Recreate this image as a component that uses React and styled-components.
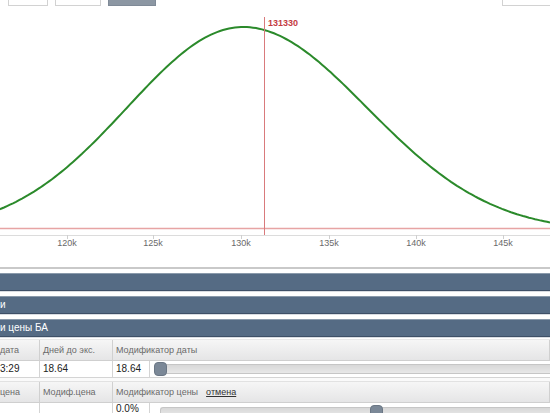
import React from "react";
import styled, { createGlobalStyle } from "styled-components";

const GlobalStyle = createGlobalStyle`
  html, body {
    margin: 0;
    padding: 0;
    background: #ffffff;
    overflow: hidden;
  }
  body {
    font-family: "Liberation Sans", Arial, sans-serif;
  }
`;

const Page = styled.div`
  width: 550px;
  height: 413px;
  overflow: hidden;
  display: flex;
  flex-direction: column;

  & > * {
    flex: none;
  }
`;

const ButtonRow = styled.div`
  height: 6px;
  display: flex;
  align-items: flex-end;
  gap: 7px;
  padding-left: 8px;
  overflow: hidden;
`;
const RangeButton = styled.div`
  flex: none;
  width: ${(p) => p.w}px;
  height: 20px;
  box-sizing: border-box;
  border: 1px solid ${(p) => (p.active ? "#7f8a97" : "#d2d2d2")};
  background: ${(p) => (p.active ? "#8c97a3" : "#ffffff")};
  margin-left: ${(p) => (p.right ? "auto" : "0")};
  margin-right: ${(p) => (p.right ? "-4px" : "0")};
`;

const ChartBox = styled.div`
  height: 261px;
  border-bottom: 2px solid #c9c9c9;
`;

const Sections = styled.div`
  display: flex;
  flex-direction: column;
  padding-top: 4px;
`;
const SectionBar = styled.div`
  height: 16px;
  margin-top: ${(p) => (p.first ? "0" : "5px")};
  background: #556b84;
  border-top: 1px solid #8a9aab;
  border-bottom: 1px solid #3e5067;
  color: #ffffff;
  font-size: 10px;
  line-height: 16px;
  white-space: nowrap;
  box-shadow: 0 1px 0 #d9dde2;
`;

const Table = styled.div`
  margin-top: 2px;
  display: grid;
  grid-template-columns: 40px 73px 37px 1fr;
  border-top: 1px solid #e8e8e8;
`;
const HeadCell = styled.div`
  grid-column: ${(p) => p.span || "auto"};
  height: 21px;
  box-sizing: border-box;
  background: linear-gradient(#f6f6f6, #e5e5e6);
  border-right: 1px solid #d0d0d0;
  border-bottom: 1px solid #cfcfcf;
  color: #6a6a6a;
  font-size: 9px;
  line-height: 20px;
  padding-left: ${(p) => (p.pad === 0 ? 0 : 3)}px;
  white-space: nowrap;
  overflow: hidden;
`;
const DataCell = styled.div`
  height: ${(p) => p.h || 17}px;
  box-sizing: border-box;
  background: #ffffff;
  border-right: 1px solid #d4d4d4;
  border-bottom: ${(p) => (p.last ? "none" : "1px solid #d4d4d4")};
  color: #222;
  font-size: 10px;
  line-height: ${(p) => (p.last ? 12 : 16)}px;
  padding-left: ${(p) => (p.pad === 0 ? 0 : 3)}px;
  white-space: nowrap;
  overflow: hidden;
`;
const Spacer = styled.div`
  grid-column: 1 / -1;
  height: 3px;
  background: #fafafa;
  border-bottom: 1px solid #e2e2e2;
`;
const SliderCell = styled.div`
  display: flex;
  align-items: ${(p) => (p.top ? "flex-start" : "center")};
  padding-left: ${(p) => p.inset}px;
  padding-top: ${(p) => (p.top ? 4 : 0)}px;
  height: ${(p) => p.h}px;
  box-sizing: border-box;
  border-bottom: ${(p) => (p.last ? "none" : "1px solid #d4d4d4")};
  background: #fff;
`;
const Track = styled.div`
  position: relative;
  flex: 1;
  height: 10px;
  box-sizing: border-box;
  background: linear-gradient(#d8d8d8, #e8e8e8);
  border: 1px solid #c6c6c6;
  border-right: none;
  border-radius: 3px 0 0 3px;
`;
const Thumb = styled.div`
  position: absolute;
  top: -3px;
  left: ${(p) => p.at}px;
  width: 13px;
  height: 14px;
  border-radius: 4px;
  background: #7b8897;
  border: 1px solid #6b7785;
  box-sizing: border-box;
`;
const CancelLink = styled.span`
  margin-left: 8px;
  color: #333;
  text-decoration: underline;
`;

const ticks = [
  { x: 67, label: "120k" },
  { x: 153, label: "125k" },
  { x: 241, label: "130k" },
  { x: 329, label: "135k" },
  { x: 416, label: "140k" },
  { x: 503, label: "145k" },
];

const buildCurve = () => {
  const peakX = 243;
  const base = 232;
  const amp = base - 27;
  const pts = [];
  for (let x = -2; x <= 552; x += 3) {
    const d = x - peakX;
    const s = d < 0 ? 116 : 124;
    const y = base - amp * Math.exp(-(d * d) / (2 * s * s));
    pts.push(`${x},${y.toFixed(1)}`);
  }
  return "M" + pts.join(" L");
};

const DistributionChart = () => (
  <svg width="550" height="261" viewBox="0 6 550 261" style={{ display: "block" }}>
    <line x1="0" y1="228.5" x2="550" y2="228.5" stroke="#e7a4a4" strokeWidth="1.5" />
    <line x1="0" y1="235.5" x2="550" y2="235.5" stroke="#dcdcdc" strokeWidth="1" />
    {ticks.map((t) => (
      <g key={t.label}>
        <line x1={t.x + 0.5} y1="235" x2={t.x + 0.5} y2="239" stroke="#cfcfcf" />
        <text x={t.x} y="246" fontSize="9" fill="#6a6a6a" textAnchor="middle" fontFamily="Liberation Sans, Arial, sans-serif">
          {t.label}
        </text>
      </g>
    ))}
    <path d={buildCurve()} fill="none" stroke="#2b8a2b" strokeWidth="2" />
    <line x1="264.5" y1="17" x2="264.5" y2="235" stroke="#d97a7c" strokeWidth="1" />
    <text x="268" y="26" fontSize="9" fontWeight="bold" fill="#c43c3f" fontFamily="Liberation Sans, Arial, sans-serif">
      131330
    </text>
  </svg>
);

export default function App() {
  return (
    <Page>
      <GlobalStyle />
      <ButtonRow>
        <RangeButton w={40} />
        <RangeButton w={46} />
        <RangeButton w={48} active />
        <RangeButton w={52} right />
      </ButtonRow>
      <ChartBox>
        <DistributionChart />
      </ChartBox>
      <Sections>
        <SectionBar first />
        <SectionBar>и</SectionBar>
        <SectionBar>и цены БА</SectionBar>
      </Sections>
      <Table>
        <HeadCell pad={0}>дата</HeadCell>
        <HeadCell>Дней до экс.</HeadCell>
        <HeadCell span="3 / 5">Модификатор даты</HeadCell>
        <DataCell pad={0}>3:29</DataCell>
        <DataCell>18.64</DataCell>
        <DataCell>18.64</DataCell>
        <SliderCell inset={6} h={17}>
          <Track>
            <Thumb at={-3} />
          </Track>
        </SliderCell>
        <Spacer />
        <HeadCell pad={0}>цена</HeadCell>
        <HeadCell>Модиф.цена</HeadCell>
        <HeadCell span="3 / 5">
          Модификатор цены<CancelLink>отмена</CancelLink>
        </HeadCell>
        <DataCell pad={0} h={20} last />
        <DataCell h={20} last />
        <DataCell h={20} last>
          0.0%
        </DataCell>
        <SliderCell inset={10} h={20} top last>
          <Track>
            <Thumb at={209} />
          </Track>
        </SliderCell>
      </Table>
    </Page>
  );
}
